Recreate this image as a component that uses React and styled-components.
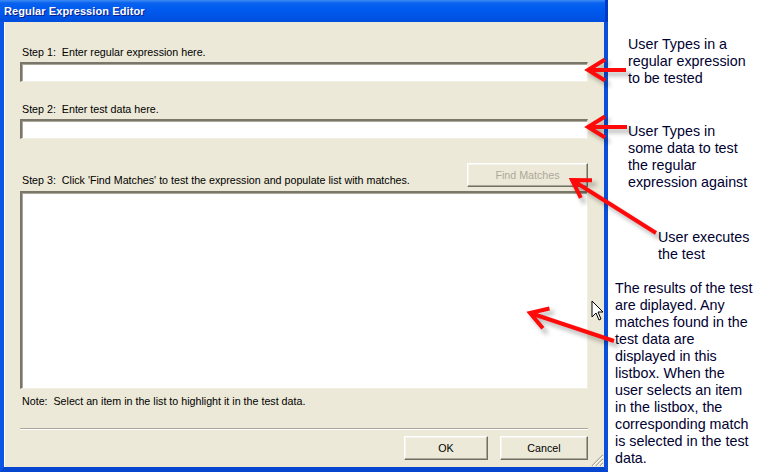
import React from "react";
import styled, { createGlobalStyle } from "styled-components";

const Global = createGlobalStyle`
  html, body { margin: 0; padding: 0; background: #ffffff; }
  body { width: 760px; height: 472px; overflow: hidden; }
`;

const Page = styled.div`
  position: relative;
  width: 760px;
  height: 472px;
  display: flex;
  background: #ffffff;
`;

const Window = styled.div`
  width: 608px;
  height: 472px;
  flex: none;
  display: flex;
  flex-direction: column;
  font-family: "Liberation Sans", Arial, sans-serif;
  font-size: 10.7px;
  color: #000;
`;

const TitleBar = styled.div`
  height: 22px;
  flex: none;
  display: flex;
  align-items: center;
  padding-left: 4px;
  background: linear-gradient(to bottom, #3d8cf5 0px, #0a63ee 3px, #005cf0 8px, #0055e8 15px, #004fdd 22px);
  color: #fff;
  font-weight: bold;
  font-size: 11px;
  letter-spacing: 0.1px;
  text-shadow: 1px 1px 0 #0a1f8a;
  border-right: 3px solid #0038c8;
`;

const Body = styled.div`
  flex: 1;
  background: #ece9d8;
  border-left: 4px solid #0a55e6;
  border-right: 4px solid #0a4fd8;
  border-bottom: 5px solid #0545cf;
  box-shadow: inset 1px 0 0 #ffffff;
  display: flex;
  flex-direction: column;
  padding: 24px 16px 0 16px;
  position: relative;
`;

const Label = styled.div`
  height: 13px;
  line-height: 13px;
  padding-left: 2px;
  white-space: pre;
  margin-top: ${(p) => p.$mt || 0}px;
`;

const TextInput = styled.div`
  box-sizing: border-box;
  height: 20px;
  margin-top: ${(p) => p.$mt || 0}px;
  background: #fff;
  border-top: 2px solid #7a776a;
  border-left: 2px solid #7a776a;
  border-right: 1px solid #f1efe2;
  border-bottom: 1px solid #f1efe2;
  box-shadow: inset 1px 1px 0 #aca899;
`;

const Step3Row = styled.div`
  margin-top: 24px;
  display: flex;
  align-items: flex-end;
  justify-content: space-between;
  height: 24px;
`;

const Button = styled.div`
  box-sizing: border-box;
  width: ${(p) => p.$w}px;
  height: 24px;
  display: flex;
  align-items: center;
  justify-content: center;
  background: #ece9d8;
  color: ${(p) => (p.$disabled ? "#aca899" : "#000")};
  border-top: 1px solid #ffffff;
  border-left: 1px solid #ffffff;
  border-right: 1px solid #716f64;
  border-bottom: 1px solid #716f64;
  box-shadow: inset -1px -1px 0 #aca899, inset 1px 1px 0 #f5f4ee;
`;

const ListBox = styled.div`
  box-sizing: border-box;
  margin-top: 4px;
  height: 198px;
  background: #fff;
  border-top: 2px solid #7a776a;
  border-left: 2px solid #7a776a;
  border-right: 1px solid #f1efe2;
  border-bottom: 1px solid #f1efe2;
  box-shadow: inset 1px 1px 0 #aca899;
`;

const Separator = styled.div`
  margin-top: 20px;
  height: 1px;
  background: #aca899;
  border-bottom: 1px solid #ffffff;
`;

const ButtonRow = styled.div`
  margin-top: 6px;
  display: flex;
  justify-content: flex-end;
  gap: 12px;
`;

const Grip = styled.svg`
  position: absolute;
  right: 0;
  bottom: 0;
`;

const Notes = styled.div`
  flex: 1;
  padding-top: 36px;
  font-family: "Liberation Sans", Arial, sans-serif;
  font-size: 14.3px;
  line-height: 17px;
  color: #000030;
`;

const Note = styled.div`
  margin-top: ${(p) => p.$mt || 0}px;
  margin-left: ${(p) => p.$ml || 0}px;
  white-space: pre;
`;

const Overlay = styled.svg`
  position: absolute;
  left: 0;
  top: 0;
  pointer-events: none;
`;

function Arrow({ tip, tail }) {
  const [tx, ty] = tip;
  const [sx, sy] = tail;
  const ang = Math.atan2(sy - ty, sx - tx);
  const len = 20;
  const spread = 0.55;
  const w1 = [tx + len * Math.cos(ang + spread), ty + len * Math.sin(ang + spread)];
  const w2 = [tx + len * Math.cos(ang - spread), ty + len * Math.sin(ang - spread)];
  const d = `M${sx},${sy} L${tx},${ty} M${w1[0]},${w1[1]} L${tx},${ty} L${w2[0]},${w2[1]}`;
  return (
    <g>
      <path d={d} transform="translate(3,4)" stroke="#000" strokeOpacity="0.28" strokeWidth="4" fill="none" filter="url(#blur)" strokeLinecap="round" />
      <path d={d} stroke="#ff0a0a" strokeWidth="4" fill="none" strokeLinecap="butt" strokeLinejoin="miter" />
    </g>
  );
}

export default function App() {
  return (
    <Page>
      <Global />
      <Window>
        <TitleBar>Regular Expression Editor</TitleBar>
        <Body>
          <Label>{"Step 1:  Enter regular expression here."}</Label>
          <TextInput $mt={3} />
          <Label $mt={21}>{"Step 2:  Enter test data here."}</Label>
          <TextInput $mt={3} />
          <Step3Row>
            <Label>{"Step 3:  Click 'Find Matches' to test the expression and populate list with matches."}</Label>
            <Button $w={121} $disabled>Find Matches</Button>
          </Step3Row>
          <ListBox />
          <Label $mt={6}>{"Note:  Select an item in the list to highlight it in the test data."}</Label>
          <Separator />
          <ButtonRow>
            <Button $w={84}>OK</Button>
            <Button $w={88}>Cancel</Button>
          </ButtonRow>
          <Grip width="14" height="14" viewBox="0 0 14 14">
            {[0, 4, 8].map((o) => (
              <g key={o}>
                <line x1={13} y1={2 + o} x2={2 + o} y2={13} stroke="#aca899" strokeWidth="1.2" />
                <line x1={13} y1={3 + o} x2={3 + o} y2={13} stroke="#ffffff" strokeWidth="1" />
              </g>
            ))}
          </Grip>
        </Body>
      </Window>
      <Notes>
        <Note $ml={20}>{"User Types in a\nregular expression\nto be tested"}</Note>
        <Note $ml={20} $mt={36}>{"User Types in\nsome data to test\nthe regular\nexpression against"}</Note>
        <Note $ml={50} $mt={38}>{"User executes\nthe test"}</Note>
        <Note $ml={7} $mt={17}>{"The results of the test\nare diplayed. Any\nmatches found in the\ntest data are\ndisplayed in this\nlistbox. When the\nuser selects an item\nin the listbox, the\ncorresponding match\nis selected in the test\ndata."}</Note>
      </Notes>
      <Overlay width="760" height="472" viewBox="0 0 760 472">
        <defs>
          <filter id="blur" x="-20%" y="-20%" width="140%" height="140%">
            <feGaussianBlur stdDeviation="2" />
          </filter>
        </defs>
        <Arrow tip={[588, 70]} tail={[626, 70]} />
        <Arrow tip={[588, 127]} tail={[627, 127]} />
        <Arrow tip={[572, 180]} tail={[656, 233]} />
        <Arrow tip={[530, 313]} tail={[614, 341]} />
        <path d="M592,301 L592,317 L596,313 L599,320 L601,319 L598,312 L603,312 Z" fill="#fff" stroke="#000" strokeWidth="1" strokeLinejoin="miter" />
      </Overlay>
    </Page>
  );
}
